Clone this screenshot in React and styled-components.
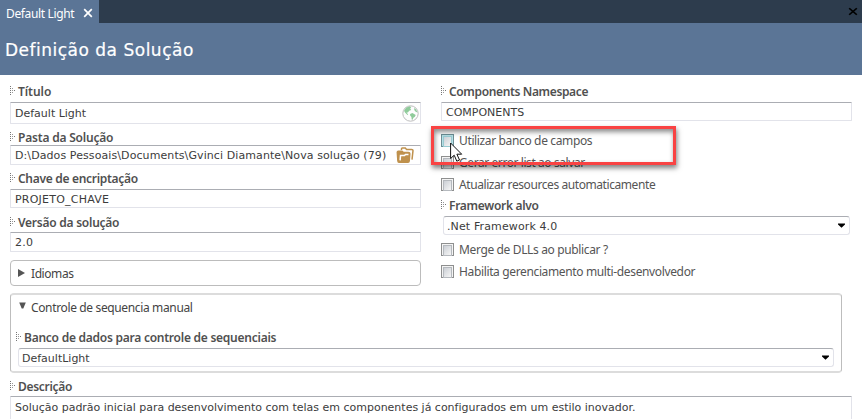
import React from "react";
import styled, { createGlobalStyle } from "styled-components";

const Global = createGlobalStyle`
  * { box-sizing: border-box; }
  body { margin: 0; background: #fff; overflow: hidden; }
`;

const ui = `"Noto Sans", "Open Sans", sans-serif`;
const wide = `"DejaVu Sans", "Liberation Sans", sans-serif`;

const Page = styled.main`
  width: 862px;
  height: 419px;
  position: relative;
  overflow: hidden;
  background: #fff;
  color: #444;
  font-family: ${ui};
  font-size: 12px;
`;

const TabBar = styled.nav`
  height: 23px;
  display: flex;
  justify-content: space-between;
  background: #2d3c4d;
`;

const Tab = styled.div`
  width: 99px;
  padding: 3px 6px 0 6px;
  display: flex;
  justify-content: space-between;
  background: #5b7596;
  color: #fff;
  line-height: 21px;
  white-space: nowrap;
  letter-spacing: -0.35px;
`;

const CloseIcon = styled.svg`
  width: 8px;
  height: 8px;
  flex: none;
  overflow: visible;
  fill: none;
  stroke: ${(p) => p.$color};
  stroke-width: 1.7;
`;

const TabClose = styled(CloseIcon)`
  margin: 6px 1px 0 0;
`;

const WindowClose = styled(CloseIcon)`
  height: 7px;
  margin: 8px 5px 0 0;
`;

const Header = styled.header`
  height: 52px;
  padding: 15px 0 0 5px;
  background: #5b7596;
`;

const Title = styled.h1`
  margin: 0;
  color: #fff;
  font: 400 17px/24px ${wide};
  letter-spacing: 0.5px;
  -webkit-text-stroke: 0.2px #fff;
  white-space: nowrap;
`;

const Columns = styled.div`
  height: 218px;
  display: grid;
  grid-template-columns: 411px 411px;
  column-gap: 20px;
  padding: 8px 0 0 10px;
`;

const Column = styled.section`
  display: flex;
  flex-direction: column;
`;

const LabelRow = styled.div`
  height: 17px;
  margin-top: ${(p) => p.$top || 0}px;
  margin-bottom: ${(p) => p.$bottom || 0}px;
  display: flex;
  align-items: flex-start;
  gap: 3px;
  flex: none;
`;

const Grip = styled.svg`
  width: 5px;
  height: 9px;
  margin-top: 3px;
  flex: none;
`;

const LabelText = styled.span`
  color: #505050;
  font-weight: 600;
  line-height: 17px;
  letter-spacing: ${(p) => p.$spacing}px;
  white-space: nowrap;
`;

const Input = styled.div`
  height: ${(p) => p.$height}px;
  padding: ${(p) => (p.$height === 19 ? 1 : 0)}px 1px 0 4px;
  display: flex;
  align-items: center;
  justify-content: space-between;
  flex: none;
  border: 1px solid #e2e3ea;
  border-top-color: #abadb3;
  border-radius: 1px;
  background: #fff;
`;

const Select = styled(Input)`
  margin: 0 2px;
  padding: 1px 4px 0 3px;
  border-radius: 3px;
`;

const Value = styled.span`
  color: #3c3c3c;
  font: 11px/15px ${wide};
  letter-spacing: ${(p) => p.$spacing || 0}px;
  white-space: nowrap;
`;

const CheckList = styled.div`
  margin-top: ${(p) => p.$top}px;
`;

const CheckRow = styled.div`
  height: 22px;
  display: flex;
  align-items: center;
  gap: 5px;
  color: #555;
`;

const CheckBox = styled.span`
  width: 13px;
  height: 13px;
  border: 1px solid ${(p) => (p.$hot ? "#6c8e95" : "#8e8f8f")};
  padding: 1px;
  background: ${(p) => (p.$hot ? "#b7dfe5" : "#f4f4f4")};

  &::before {
    content: "";
    display: block;
    height: 9px;
    border: 1px solid ${(p) => (p.$hot ? "#98cbd2" : "#b5b9be")};
    background: linear-gradient(135deg, #cbcfd5, #f6f6f6);
  }
`;

const PlainText = styled.span`
  line-height: 17px;
  letter-spacing: ${(p) => p.$spacing || -0.36}px;
  white-space: nowrap;
`;

const Panel = styled.section`
  height: 26px;
  margin-top: 8px;
  padding: 0 7px;
  display: flex;
  align-items: center;
  gap: 6px;
  border: 1px solid #bcbcbc;
  border-radius: 4px;
`;

const Arrow = styled.svg`
  width: 7px;
  height: 8px;
  flex: none;
`;

const Group = styled.section`
  width: 832px;
  height: 80px;
  margin-left: 10px;
  padding: 0 5px;
  border: 1px solid #bdbdbd;
  border-top: 2px solid #dcdcdc;
  border-bottom: 2px solid #dcdcdc;
  border-radius: 4px;
`;

const GroupHead = styled.div`
  height: 23px;
  padding: 1px 0 0 3px;
  display: flex;
  align-items: center;
  gap: 5px;

  ${Arrow} { margin-top: -4px; }
`;

const Description = styled.section`
  padding: 5px 10px 0;
`;

const DescriptionBox = styled(Input)`
  height: 40px;
  align-items: flex-start;
  padding-top: 3px;
`;

const Highlight = styled.div`
  position: absolute;
  left: 431px;
  top: 126px;
  width: 245px;
  height: 39px;
  border: 3px solid #f94343;
  box-shadow: 1px 3px 5px rgba(0, 0, 0, 0.5), inset 1px 3px 5px rgba(0, 0, 0, 0.45);
`;

const Cursor = styled.svg`
  position: absolute;
  left: 450px;
  top: 142px;
  width: 13px;
  height: 21px;
`;

const Globe = styled.svg`
  width: 17px;
  height: 17px;
`;

const Folder = styled.svg`
  width: 18px;
  height: 17px;
  margin-right: 5px;
`;

const crossPath = <path d="M.2.2 7.8 7.8M7.8.2.2 7.8" />;

function Label({ children, top, bottom, spacing = -0.25 }) {
  return (
    <LabelRow $top={top} $bottom={bottom}>
      <Grip viewBox="0 0 5 9" shapeRendering="crispEdges">
        <path d="M.5 0v9" stroke="#777" strokeDasharray="1 1" />
        <path d="M2.5 2v6" stroke="#999" strokeDasharray="1 1" />
        <path d="M4 4.5h1" stroke="#777" />
      </Grip>
      <LabelText $spacing={spacing}>{children}</LabelText>
    </LabelRow>
  );
}

function DropArrow() {
  return (
    <Arrow viewBox="0 0 7 8">
      <path d="M0 1.4h7v1L3.5 5.7 0 2.4z" fill="#000" />
    </Arrow>
  );
}

function Check({ children, hot, spacing }) {
  return (
    <CheckRow>
      <CheckBox $hot={hot} />
      <PlainText $spacing={spacing}>{children}</PlainText>
    </CheckRow>
  );
}

export default function App() {
  return (
    <Page>
      <Global />
      <TabBar>
        <Tab>
          Default Light
          <TabClose viewBox="0 0 8 8" $color="#fff">{crossPath}</TabClose>
        </Tab>
        <WindowClose viewBox="0 0 8 8" preserveAspectRatio="none" $color="#000">{crossPath}</WindowClose>
      </TabBar>
      <Header>
        <Title>Definição da Solução</Title>
      </Header>

      <Columns>
        <Column>
          <Label bottom={2} spacing={-0.05}>Título</Label>
          <Input $height={22}>
            <Value>Default Light</Value>
            <Globe viewBox="0 0 17 17">
              <circle cx="8.5" cy="8.5" r="7.7" fill="#fdfdfd" stroke="#bdbdbd" />
              <path d="M2 5.8 4.3 2.6 8 1.2l1.2 1-1 1.2 1 1.5-2 .8-1.3 1.7-1.4.2 1.7 1.8-.7.5L3 7.5zM8.1 9l2.3-.9 3.3 2-.8 1.6-1.5 1-.8 2-.9-.3-.3-2.4-1.3-1.5zM12 3l2.2 1.4 1.3 3-1.8-.6-1.3-1.6z" fill="#8fcb9a" />
            </Globe>
          </Input>
          <Label top={5} bottom={-1} spacing={-0.2}>Pasta da Solução</Label>
          <Input $height={20}>
            <Value $spacing={0.09}>D:\Dados Pessoais\Documents\Gvinci Diamante\Nova solução (79)</Value>
            <Folder viewBox="0 0 18 17">
              <path d="M5.5 2.9V1.8q0-.8.8-.8h3l1.3 1.4h5.1q1.3 0 1.3 1.2L16 12.6" fill="none" stroke="#bf914d" strokeWidth="1.5" />
              <path d="M2.9 15.2Q2 15.2 1.9 14L1.3 5.2q0-1 1-1h3.8l1.3 1.4h5.1q1.3 0 1.3 1.2L13.2 14q-.1 1.2-1.2 1.2z" fill="#bf914d" stroke="#bf914d" strokeWidth="1.5" strokeLinejoin="round" />
              <path d="M4.1 13.4 4.5 8.6h4l1-1.1h3" fill="none" stroke="#fff" strokeWidth="1.5" />
            </Folder>
          </Input>
          <Label top={5} bottom={2} spacing={-0.3}>Chave de encriptação</Label>
          <Input $height={19}>
            <Value $spacing={0.23}>PROJETO_CHAVE</Value>
          </Input>
          <Label top={6} bottom={1}>Versão da solução</Label>
          <Input $height={20}>
            <Value $spacing={0.2}>2.0</Value>
          </Input>
          <Panel>
            <Arrow viewBox="0 0 7 8">
              <path d="M0 0 7 4 0 8z" fill="#555" />
            </Arrow>
            <PlainText $spacing={-0.42}>Idiomas</PlainText>
          </Panel>
        </Column>

        <Column>
          <Label bottom={2} spacing={-0.36}>Components Namespace</Label>
          <Input $height={19}>
            <Value>COMPONENTS</Value>
          </Input>
          <CheckList $top={8}>
            <Check hot>Utilizar banco de campos</Check>
            <Check spacing={-0.42}>Gerar error list ao salvar</Check>
            <Check spacing={-0.42}>Atualizar resources automaticamente</Check>
          </CheckList>
          <Label top={2} bottom={2} spacing={-0.3}>Framework alvo</Label>
          <Select $height={19}>
            <Value $spacing={0.12}>.Net Framework 4.0</Value>
            <DropArrow />
          </Select>
          <CheckList $top={3}>
            <Check>Merge de DLLs ao publicar ?</Check>
            <Check>Habilita gerenciamento multi-desenvolvedor</Check>
          </CheckList>
        </Column>
      </Columns>

      <Group>
        <GroupHead>
          <Arrow viewBox="0 0 7 8">
            <path d="M.2 1.4h6.6L4.3 7.4H2.7z" fill="#555" />
          </Arrow>
          <PlainText>Controle de sequencia manual</PlainText>
        </GroupHead>
        <Label top={11} bottom={2}>Banco de dados para controle de sequenciais</Label>
        <Select $height={19}>
          <Value>DefaultLight</Value>
          <DropArrow />
        </Select>
      </Group>

      <Description>
        <Label bottom={1} spacing={-0.3}>Descrição</Label>
        <DescriptionBox>
          <Value $spacing={-0.01}>Solução padrão inicial para desenvolvimento com telas em componentes já configurados em um estilo inovador.</Value>
        </DescriptionBox>
      </Description>

      <Highlight />
      <Cursor viewBox="0 0 13 21">
        <path d="M.6 1v15.5l3.6-3.3 2.6 6 2.7-1.2-2.6-5.8h4.8z" fill="#fff" stroke="#111" />
      </Cursor>
    </Page>
  );
}
